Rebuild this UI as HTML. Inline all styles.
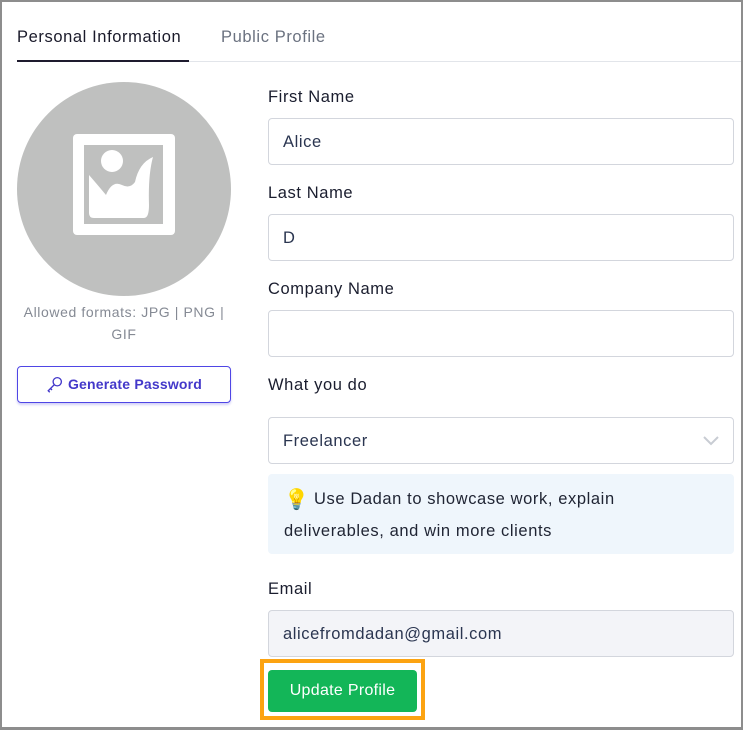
<!DOCTYPE html>
<html><head><style>
*{box-sizing:border-box;margin:0;padding:0}
body{width:743px;height:730px;background:#fff;font-family:"Liberation Sans",sans-serif;position:relative;overflow:hidden;letter-spacing:0.6px}
.frame{position:absolute;left:0;top:0;width:743px;height:730px;border:2px solid #8d8d8d;border-bottom-width:3px}
.abs{position:absolute}
.lbl{position:absolute;left:268px;font-size:16.5px;color:#1a1d2e}
.inp{position:absolute;left:268px;width:466px;height:47px;border:1px solid #d3d6dd;border-radius:4px;font-size:16.5px;color:#2a3550;padding-left:14px;line-height:47px}
</style></head><body>
<div class="frame"></div>
<div class="abs" style="left:17px;top:28px;font-size:16.5px;color:#1a1a2a">Personal Information</div>
<div class="abs" style="left:221px;top:28px;font-size:16.5px;color:#6b7280">Public Profile</div>
<div class="abs" style="left:17px;top:61px;width:724px;height:1px;background:#e2e5ea"></div>
<div class="abs" style="left:17px;top:60px;width:172px;height:2px;background:#1e1b2e"></div>

<div class="abs" style="left:17px;top:82px;width:214px;height:214px;border-radius:50%;background:#bfc0bf"></div>
<div class="abs" style="left:73px;top:134px;width:102px;height:101px;background:#fff;border-radius:4px"></div>
<div class="abs" style="left:84px;top:145px;width:79px;height:79px;background:#bfc0bf"></div>
<svg class="abs" style="left:84px;top:145px" width="79" height="79" viewBox="0 0 79 79">
<path d="M5 30 Q12 38 22 50 Q28 35 38 40 Q46 44 51 37 Q55 18 69 12 Q64 30 65 60 Q65 73 60 73 L10 73 Q5 73 5 68 Z" fill="#fff"/>
<circle cx="28" cy="16" r="11" fill="#fff"/>
</svg>
<div class="abs" style="left:10px;top:301px;width:228px;text-align:center;font-size:14px;line-height:22px;color:#858a94">Allowed formats: JPG | PNG |<br>GIF</div>
<div class="abs" style="left:17px;top:366px;width:214px;height:37px;border:1px solid #4f46e5;border-radius:4px;box-shadow:0 2px 2px rgba(79,70,229,.25);color:#4338ca;font-size:14px;font-weight:bold;line-height:35px;text-align:center;letter-spacing:0.2px">
<svg width="18" height="18" viewBox="0 0 24 24" style="vertical-align:-4px;margin-right:4px" fill="none" stroke="#4338ca" stroke-width="1.8"><circle cx="15" cy="9" r="5.5"/><path d="M11.5 12.5 L3 21 L5 23 M6 18 L8 20"/></svg>Generate Password</div>

<div class="lbl" style="top:88px">First Name</div>
<div class="inp" style="top:118px">Alice</div>
<div class="lbl" style="top:184px">Last Name</div>
<div class="inp" style="top:214px">D</div>
<div class="lbl" style="top:280px">Company Name</div>
<div class="inp" style="top:310px"></div>
<div class="lbl" style="top:376px">What you do</div>
<div class="inp" style="top:417px">Freelancer
<svg class="abs" style="right:14px;top:18px" width="16" height="10" viewBox="0 0 16 10"><path d="M1 1 L8 8 L15 1" fill="none" stroke="#c8ccd3" stroke-width="2"/></svg></div>
<div class="abs" style="left:268px;top:474px;width:466px;height:80px;background:#eff6fc;border-radius:4px;padding:10px 16px 0 16px;font-size:16.5px;line-height:31px;color:#1f2433">
<span style="display:inline-block;width:30px;font-size:20px;vertical-align:-2px">💡</span>Use Dadan to showcase work, explain<br>deliverables, and win more clients</div>
<div class="lbl" style="top:580px">Email</div>
<div class="inp" style="top:610px;background:#f3f4f8">alicefromdadan@gmail.com</div>
<div class="abs" style="left:260px;top:659px;width:165px;height:61px;border:4px solid #fca311"></div>
<div class="abs" style="left:268px;top:670px;width:149px;height:42px;background:#13b658;border-radius:4px;color:#fff;font-size:16px;line-height:42px;text-align:center;letter-spacing:0.3px">Update Profile</div>
</body></html>
